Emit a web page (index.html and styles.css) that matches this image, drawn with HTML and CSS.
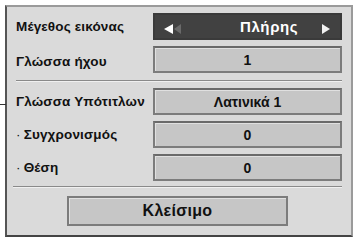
FILE: index.html
```html
<!DOCTYPE html>
<html lang="el">
<head>
    <meta charset="UTF-8">
    <meta name="viewport" content="width=device-width, initial-scale=1.0">
    <title>Ρυθμίσεις</title>
    <link rel="stylesheet" href="styles.css">
</head>
<body>
    <!-- Settings panel -->
    <div class="panel">
        <span class="leader"></span>

        <div class="row">
            <span class="label">Μέγεθος εικόνας</span>
            <div class="value dark">
                <span class="arrow left"></span>
                <span class="ghost"></span>
                <span class="text">Πλήρης</span>
                <span class="arrow right"></span>
            </div>
        </div>
        <div class="row">
            <span class="label low">Γλώσσα ήχου</span>
            <div class="value">1</div>
        </div>

        <div class="divider"></div>

        <div class="row">
            <span class="label">Γλώσσα Υπότιτλων</span>
            <div class="value">Λατινικά 1</div>
        </div>
        <div class="row">
            <span class="label sub">Συγχρονισμός</span>
            <div class="value">0</div>
        </div>
        <div class="row">
            <span class="label sub">Θέση</span>
            <div class="value">0</div>
        </div>

        <div class="divider last"></div>

        <div class="button-area">
            <button>Κλείσιμο</button>
        </div>
    </div>
</body>
</html>
```
FILE: styles.css
```css
/* General */
* {
    margin: 0;
    padding: 0;
    box-sizing: border-box;
}
body {
    width: 356px;
    height: 237px;
    overflow: hidden;
    background: #fff;
    font-family: 'Liberation Sans', Arial, sans-serif;
    font-weight: 700;
    color: #111;
}
/* Panel */
.panel {
    position: relative;
    margin: 5px 3px 0 5px;
    height: 232px;
    padding: 6px 9px 0 9px;
    background: #dadada;
    border: 2px solid #9a9a9a;
    border-left-color: #555;
    border-bottom-color: #444;
    display: flex;
    flex-direction: column;
}
.leader {
    position: absolute;
    left: -7px;
    top: 97px;
    width: 6px;
    height: 1px;
    background: #333;
}
/* Rows */
.row {
    display: flex;
    align-items: center;
    height: 27px;
    margin-bottom: 6px;
}
.row:nth-of-type(2) {
    margin-bottom: 0;
}
.label {
    width: 137px;
    font-size: 13.5px;
    letter-spacing: .15px;
    white-space: nowrap;
}
.label.low {
    padding-top: 4px;
}
.label.sub::before {
    content: '·';
    margin-right: 3px;
    font-weight: 400;
}
.value {
    flex: 1;
    height: 100%;
    display: flex;
    align-items: center;
    justify-content: center;
    font-size: 14px;
    background: #c6c6c6;
    border: 2px solid #7c7c7c;
    border-top-color: #6a6a6a;
    box-shadow: inset 1px 1px 0 #e0e0e0;
}
.value.dark {
    position: relative;
    background: #414141;
    border-color: #3a3a3a;
    box-shadow: none;
    color: #fff;
    justify-content: flex-start;
}
.value.dark .text {
    margin-left: 85px;
    font-size: 15px;
    letter-spacing: .6px;
}
.arrow {
    position: absolute;
    top: 9px;
    width: 0;
    height: 0;
    border-top: 5px solid transparent;
    border-bottom: 5px solid transparent;
}
.arrow.left {
    left: 9px;
    border-right: 9px solid #fff;
}
.arrow.right {
    right: 10px;
    border-left: 8px solid #f2f2f2;
}
.ghost {
    position: absolute;
    left: 19px;
    top: 9px;
    width: 0;
    height: 0;
    border-top: 5px solid transparent;
    border-bottom: 5px solid transparent;
    border-right: 7px solid #6a6a6a;
}
/* Dividers */
.divider {
    height: 2px;
    margin: 7px 0 6px 0;
    border-top: 1px solid #8a8a8a;
    border-bottom: 1px solid #f0f0f0;
}
.divider.last {
    margin: -1px 0 8px -3px;
}
/* Button */
.button-area {
    display: flex;
    justify-content: center;
    padding-right: 54px;
}
button {
    width: 223px;
    height: 30px;
    margin-left: 51px;
    font-family: 'Liberation Sans', Arial, sans-serif;
    font-weight: 700;
    font-size: 16px;
    letter-spacing: .3px;
    color: #111;
    background: #c6c6c6;
    border: 2px solid #7c7c7c;
    box-shadow: inset 1px 1px 0 #e0e0e0;
}
```
